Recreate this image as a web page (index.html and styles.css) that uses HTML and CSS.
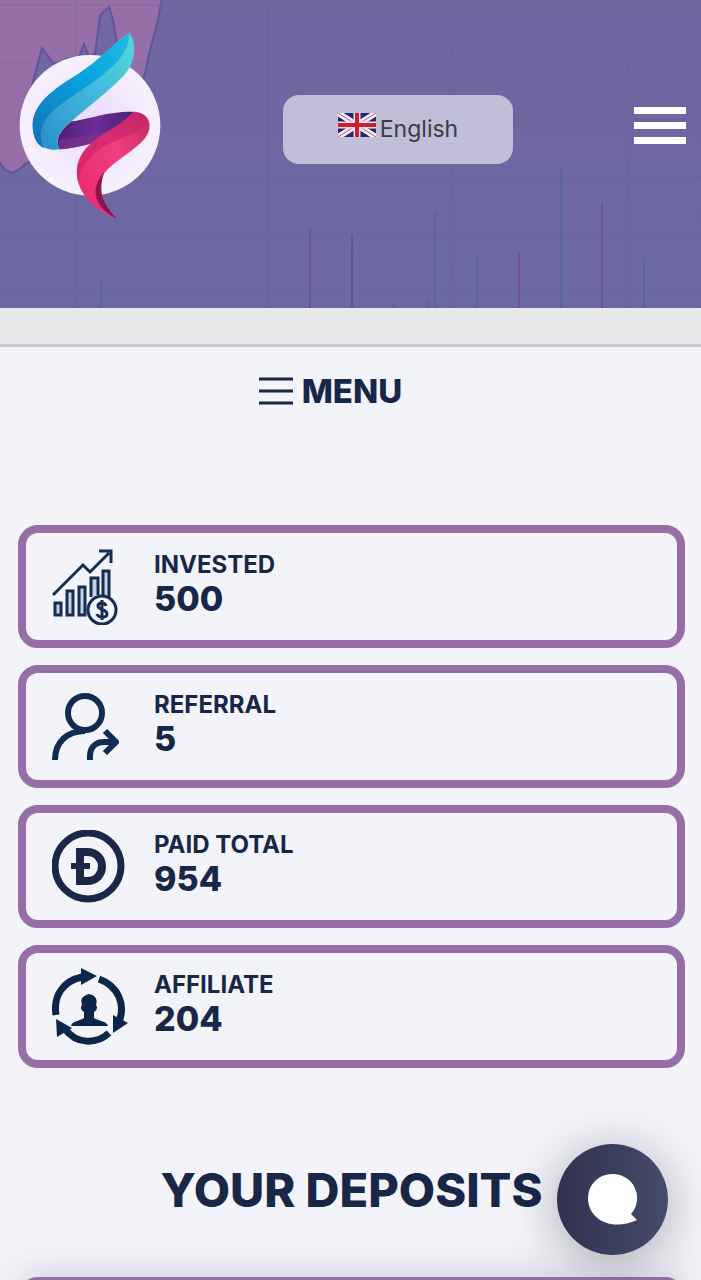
FILE: index.html
```html
<!DOCTYPE html>
<html lang="en">

<head>
    <meta charset="UTF-8">
    <meta name="viewport" content="width=device-width, initial-scale=1.0">
    <title>Account</title>
    <link rel="stylesheet" href="styles.css">
</head>

<body>
    <header class="header">
        <svg class="header-chart" viewBox="0 0 701 308" preserveAspectRatio="xMidYMid slice" aria-hidden="true">
            <defs>
                <linearGradient id="sky" x1="0" y1="0" x2="0" y2="1">
                    <stop offset="0" stop-color="#7165a0" />
                    <stop offset="1" stop-color="#6b69a5" />
                </linearGradient>
            </defs>
            <rect width="701" height="308" fill="url(#sky)" />
            <path d="M-2 -2H162L158 20L149 54L144 78L120 130L60 150L26 163L20 169L12 173L5 170L-2 160Z" fill="#966fa8" stroke="#5e559b" stroke-width="2" />
            <path d="M30 95L34 78L42 48L54 64L70 58L79 57L84 44L89 57L95 54L100 15L109 7L113 20L118 50L130 95Z" fill="#7267a3" stroke="#5e559b" stroke-width="2" />
            <path d="M0 5H701M0 62H701M0 120H701M0 178H701M0 235H701M0 294H701M76 0V308M268 0V308M453 0V308M629 0V308" stroke="#54508c" stroke-width="2" opacity=".12" />
            <path d="M101 279V308M435 212V308M477 257V308M561 169V308M644 258V308M427 300V308" stroke="#4f639f" stroke-width="2" opacity=".75" />
            <path d="M310 229V308M352 235V308M519 253V308M602 203V308M394 305V308" stroke="#74468f" stroke-width="2" opacity=".75" />
        </svg>
        <a class="logo" href="#" aria-label="Home">
            <svg viewBox="54 99 432 576">
                <defs>
                    <radialGradient id="disc">
                        <stop offset="0" stop-color="#e9d9fa" />
                        <stop offset=".8" stop-color="#f5edfd" />
                        <stop offset="1" stop-color="#f6effc" />
                    </radialGradient>
                    <linearGradient id="blueDark" x1="0" y1="1" x2="1" y2="0">
                        <stop offset="0" stop-color="#1172b2" />
                        <stop offset=".6" stop-color="#08a5e3" />
                        <stop offset="1" stop-color="#22bbdf" />
                    </linearGradient>
                    <linearGradient id="blueLight" x1="0" y1="1" x2="1" y2="0">
                        <stop offset="0" stop-color="#258bc9" />
                        <stop offset=".55" stop-color="#43b8dc" />
                        <stop offset="1" stop-color="#54dcda" />
                    </linearGradient>
                    <linearGradient id="violet">
                        <stop offset="0" stop-color="#4d2278" />
                        <stop offset=".5" stop-color="#6e2b96" />
                        <stop offset="1" stop-color="#492475" />
                    </linearGradient>
                    <linearGradient id="pink" x1="1" y1="0" x2="0" y2="1">
                        <stop offset="0" stop-color="#bd2b63" />
                        <stop offset=".4" stop-color="#f23d7e" />
                        <stop offset="1" stop-color="#e5286d" />
                    </linearGradient>
                </defs>
                <circle cx="270" cy="376" r="211" fill="url(#disc)" />
                <path d="M215 364C275 356 320 334 400 335C404 350 365 382 330 400C300 430 225 445 180 448C163 425 178 390 215 364Z" fill="url(#violet)" />
                <path d="M176 420C235 411 285 405 337 389L300 422C265 435 215 445 180 448Z" fill="#803391" opacity=".65" />
                <path d="M388 98C412 134 407 188 370 228C330 272 260 322 215 364C183 388 162 415 180 448C130 456 98 425 98 375C100 310 160 268 230 225C300 180 345 125 388 98Z" fill="url(#blueLight)" />
                <path d="M388 98C388 160 345 195 295 235C240 277 170 314 140 354C118 388 117 420 133 445C108 434 98 408 98 375C100 310 160 268 230 225C300 180 345 125 388 98Z" fill="url(#blueDark)" />
                <path d="M400 335C445 338 458 370 443 402C422 444 340 482 313 520C282 558 287 600 352 657C285 632 232 582 231 520C230 450 290 414 340 385C370 366 385 350 400 335Z" fill="url(#pink)" />
                <path d="M400 335C430 336 444 350 445 368C405 410 310 422 270 475C240 505 235 530 235 550C217 480 255 428 340 385C370 366 385 350 400 335Z" fill="#c9216a" opacity=".6" />
                <path d="M313 515C297 565 298 602 352 657C300 632 264 585 303 528Z" fill="#8c1549" />
            </svg>
        </a>
        <button class="language" type="button">
            <svg class="flag" viewBox="0 0 38 24" aria-hidden="true">
                <rect width="38" height="24" fill="#1d2973" />
                <path d="M0 0L38 24M38 0L0 24" stroke="#f2f0f7" stroke-width="6" />
                <path d="M0 0L38 24M38 0L0 24" stroke="#d84b64" stroke-width="1" />
                <path d="M19 0V24M0 12H38" stroke="#f7dfe6" stroke-width="7" />
                <path d="M19 0V24M0 12H38" stroke="#d51b32" stroke-width="4" />
            </svg>
            <span>English</span>
        </button>
        <button class="burger" type="button" aria-label="Open navigation">
            <span></span>
            <span></span>
            <span></span>
        </button>
    </header>
    <div class="strip"></div>
    <main>
        <button class="menu" type="button">
            <svg viewBox="0 0 34 28" aria-hidden="true">
                <path d="M0 2H34M0 14H34M0 26H34" stroke="#182747" stroke-width="3" />
            </svg>
            <span>MENU</span>
        </button>
        <section class="stats">
            <div class="card">
                <div class="icon">
                    <svg width="66" height="76" viewBox="0 0 66 76" fill="none" stroke="#152d50" stroke-width="3">
                        <path d="M1 46L31 16L38 23L57 4M47 2H59V14" />
                        <path d="M3 54H9V66H3ZM15 42H21V66H15ZM27 38H33V66H27ZM39 48V29H46V46M51 46V22H57V48" fill="#c3d3e3" />
                        <circle cx="50" cy="61" r="14" fill="#f3f4f9" />
                        <path d="M54 57C53 53 46 53 46 57C46 61 55 60 55 65C55 69 46 69 45 65M50 51V71" />
                    </svg>
                </div>
                <div class="info">
                    <h3>INVESTED</h3>
                    <p>500</p>
                </div>
            </div>
            <div class="card">
                <div class="icon">
                    <svg width="67" height="68" viewBox="0 0 67 68" fill="none" stroke="#102d51" stroke-width="6">
                        <circle cx="33" cy="20" r="17" />
                        <path d="M3 67C3 49 15 38 33 38M38 67V63C38 54 44 49 52 49H63" />
                        <path d="M53 38L64 49L53 60" />
                    </svg>
                </div>
                <div class="info">
                    <h3>REFERRAL</h3>
                    <p>5</p>
                </div>
            </div>
            <div class="card">
                <div class="icon">
                    <svg width="73" height="73" viewBox="0 0 73 73" fill="none" stroke="#1b2748">
                        <circle cx="36" cy="36" r="33" stroke-width="7" />
                        <path d="M28 22H35C55 22 55 51 35 51H28Z" stroke-width="8" />
                        <path d="M19 36H38" stroke-width="6" />
                    </svg>
                </div>
                <div class="info">
                    <h3>PAID TOTAL</h3>
                    <p>954</p>
                </div>
            </div>
            <div class="card">
                <div class="icon">
                    <svg width="76" height="78" viewBox="0 0 76 78" fill="#0b2649">
                        <g fill="none" stroke="#0b2649" stroke-width="7">
                            <path d="M4 47C1 28 11 13 30 9" />
                            <path d="M47 11C66 18 74 36 67 54" />
                            <path d="M57 65C44 77 24 76 13 61" />
                        </g>
                        <path d="M29 0L45 8L29 17ZM61 47L76 55L61 65ZM4 51L20 60L5 69Z" />
                        <path d="M19 58C20 53 28 53 32 50V44C29 42 28 39 30 37C28 30 31 28 37 26C43 27 46 31 44 37C46 39 45 42 42 44V50C46 53 55 53 56 58Z" />
                    </svg>
                </div>
                <div class="info">
                    <h3>AFFILIATE</h3>
                    <p>204</p>
                </div>
            </div>
        </section>
        <section class="deposits">
            <h2>YOUR DEPOSITS</h2>
            <div class="card deposit"></div>
        </section>
    </main>
    <button class="chat" type="button" aria-label="Open chat">
        <svg viewBox="0 0 50 52" aria-hidden="true">
            <path d="M24 0A24 24 0 0 1 43 40L49 46C23 58 0 45 0 24A24 24 0 0 1 24 0Z" fill="#fff" />
        </svg>
    </button>
</body>

</html>
```
FILE: styles.css
```css
* {
    margin: 0;
    padding: 0;
    box-sizing: border-box;
}

body {
    font-family: Inter, "Open Sans", sans-serif;
    color: #182747;
    background-color: #f3f4f9;
}

button {
    border: none;
    background: none;
    font-family: inherit;
    color: inherit;
    cursor: pointer;
}

svg {
    display: block;
}

.header {
    position: relative;
    display: flex;
    justify-content: space-between;
    align-items: center;
    padding: 33px 15px 83px 18px;
    background-color: #6e67a2;
}

.header-chart {
    position: absolute;
    left: 0;
    top: 0;
    width: 100%;
    height: 100%;
}

.logo,
.language,
.burger {
    position: relative;
}

.logo svg {
    width: 144px;
    height: 192px;
    overflow: visible;
}

.language {
    display: flex;
    justify-content: center;
    align-items: center;
    gap: 4px;
    width: 230px;
    height: 69px;
    border-radius: 16px;
    background-color: #c1bed8;
    color: #3d3a48;
    font-size: 23px;
}

.flag {
    width: 38px;
    height: 24px;
    margin-bottom: 8px;
}

.burger {
    display: flex;
    flex-direction: column;
    gap: 8px;
    width: 52px;
    padding-bottom: 8px;
}

.burger span {
    height: 7px;
    background-color: #fff;
}

.strip {
    height: 39px;
    background-color: #e6e8e9;
    border-bottom: 3px solid #cac9d8;
}

main {
    padding: 24px 16px 40px 18px;
}

.menu {
    display: flex;
    align-items: center;
    gap: 9px;
    margin: 0 auto;
    padding-right: 42px;
    font-size: 33px;
    line-height: 40px;
    font-weight: 800;
}

.menu svg {
    width: 34px;
    height: 28px;
}

.stats {
    display: grid;
    gap: 17px;
    margin-top: 114px;
}

.card {
    display: flex;
    align-items: center;
    gap: 26px;
    min-height: 123px;
    padding: 0 26px;
    border: 8px solid #956fa6;
    border-radius: 20px;
}

.icon {
    width: 76px;
}

.info {
    padding-bottom: 8px;
}

.info h3 {
    font-size: 24px;
    line-height: 32px;
    font-weight: 700;
}

.info p {
    font-size: 34px;
    line-height: 36px;
    font-weight: 800;
}

.deposits {
    margin-top: 92px;
}

.deposits h2 {
    font-size: 47px;
    line-height: 60px;
    font-weight: 800;
    text-align: center;
}

.deposit {
    margin-top: 57px;
    box-shadow: 0 0 40px rgba(60, 30, 80, 0.2);
}

.chat {
    position: fixed;
    right: 33px;
    bottom: 25px;
    display: flex;
    justify-content: center;
    align-items: center;
    width: 111px;
    height: 111px;
    border-radius: 50%;
    background: linear-gradient(to right, #30324e, #454b6c);
    box-shadow: 0 8px 50px rgba(30, 30, 50, 0.35);
}

.chat svg {
    width: 50px;
    height: 52px;
}
```
